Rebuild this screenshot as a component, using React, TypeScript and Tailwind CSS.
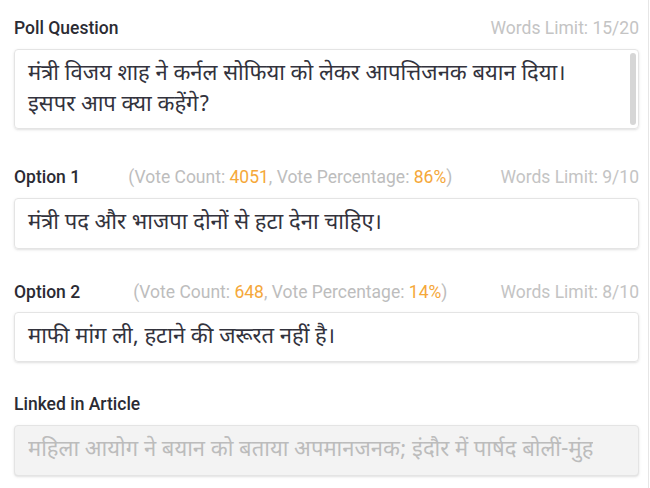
const labelFont = { fontFamily: "Roboto, 'Liberation Sans', sans-serif" };

function FieldHeader({
  label,
  limit,
  votes,
}: {
  label: string;
  limit: string;
  votes?: { count: string; pct: string };
}) {
  return (
    <div className="flex h-[22px] items-center justify-between text-[17.5px] leading-[22px]">
      <span className="font-medium text-[#2b2b33]">{label}</span>
      {votes && (
        <span className="text-[#bdbdbd]">
          (Vote Count: <span className="text-[#f5a83a]">{votes.count}</span>,
          Vote Percentage: <span className="text-[#f5a83a]">{votes.pct}</span>)
        </span>
      )}
      <span className="text-[#c4c4c4]">Words Limit: {limit}</span>
    </div>
  );
}

export default function App() {
  const hindi =
    "font-['Noto_Sans_Devanagari','Noto_Sans',Lohit,sans-serif] text-[22px] text-[#33333d]";
  return (
    <div
      className="w-[649px] h-[488px] bg-white border-r border-[#e6e6e6] pl-[14px] pr-[9px] pt-[17px] flex flex-col"
      style={labelFont}
    >
      <FieldHeader label="Poll Question" limit="15/20" />
      <div className="mt-[10px] h-[80px] rounded border border-[#e4e4e4] shadow-sm flex">
        <div className={`flex-1 pl-[13px] pt-[9px] leading-[31px] ${hindi}`}>
          मंत्री विजय शाह ने कर्नल सोफिया को लेकर आपत्तिजनक बयान दिया।
          <br />
          इसपर आप क्या कहेंगे?
        </div>
        <div className="w-[6px] mr-[2px] my-[3px] rounded-full bg-[#d6d6d6]" />
      </div>

      <div className="mt-[37px]">
        <FieldHeader
          label="Option 1"
          limit="9/10"
          votes={{ count: "4051", pct: "86%" }}
        />
      </div>
      <div
        className={`mt-[10px] h-[51px] rounded border border-[#e4e4e4] shadow-sm flex items-center pl-[13px] ${hindi}`}
      >
        मंत्री पद और भाजपा दोनों से हटा देना चाहिए।
      </div>

      <div className="mt-[32px]">
        <FieldHeader
          label="Option 2"
          limit="8/10"
          votes={{ count: "648", pct: "14%" }}
        />
      </div>
      <div
        className={`mt-[9px] h-[50px] rounded border border-[#e4e4e4] shadow-sm flex items-center pl-[13px] ${hindi}`}
      >
        माफी मांग ली, हटाने की जरूरत नहीं है।
      </div>

      <div className="mt-[31px] h-[22px] leading-[22px] font-medium text-[17.5px] text-[#2b2b33]">
        Linked in Article
      </div>
      <div className="mt-[10px] h-[51px] rounded border border-[#e4e4e4] bg-[#f3f3f3] shadow-sm flex items-center pl-[13px] pr-[40px] overflow-hidden">
        <span className="overflow-hidden whitespace-nowrap font-['Noto_Sans_Devanagari','Noto_Sans',Lohit,sans-serif] text-[22px] text-[#bcbcbc]">
          महिला आयोग ने बयान को बताया अपमानजनक; इंदौर में पार्षद बोलीं-मुंह
        </span>
      </div>
    </div>
  );
}
